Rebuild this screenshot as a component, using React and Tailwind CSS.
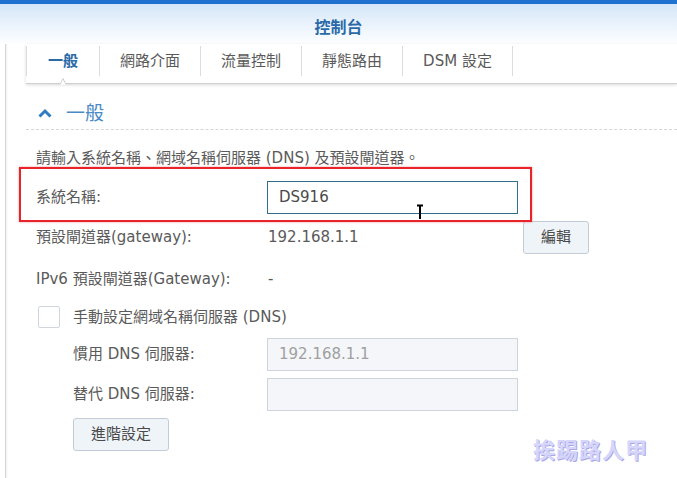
import React from 'react';

const cjk = "font-['DejaVu_Sans','Noto_Sans_CJK_TC',sans-serif]";

const tabs = [
    { label: '一般', w: 'w-[73px]', active: true },
    { label: '網路介面', w: 'w-[101px]' },
    { label: '流量控制', w: 'w-[101px]' },
    { label: '靜態路由', w: 'w-[101px]' },
    { label: 'DSM 設定', w: 'w-[111px]' },
];

const App = () => {
    return (
        <div className={`relative w-[677px] h-[478px] overflow-hidden bg-white text-[15px] text-[#5a5a5a] ${cjk}`}>
            {/* Title bar */}
            <div className="h-[4px] bg-[#1f72cf]" />
            <div className="h-[40px] bg-gradient-to-b from-[#d5e7f8] to-[#fdfeff] flex items-center justify-center pt-[8px]">
                <span className="text-[16px] font-bold text-[#2b6aa8]">控制台</span>
            </div>

            <div className="flex h-[434px]">
                {/* Left frame edge */}
                <div className="w-[8px] flex">
                    <div className="w-[5px]" />
                    <div className="w-[1px] bg-[#d6d6d6]" />
                    <div className="w-[2px] bg-gradient-to-r from-[#efefef] to-white" />
                </div>

                <div className="flex-1 pl-[18px]">
                    {/* Tabs */}
                    <div className="relative h-[40px] border-b border-[#d0d0d0] shadow-[0_1px_3px_rgba(0,0,0,0.15)]">
                        <div className="flex pt-[2px]">
                            {tabs.map((t, i) => (
                                <div
                                    key={t.label}
                                    className={`${t.w} h-[30px] flex items-center justify-center border-l border-[#dcdcdc] ${i === tabs.length - 1 ? 'border-r' : ''} ${t.active ? 'text-[#2a6aa6] font-bold' : 'text-[#5a5a5a]'}`}
                                >
                                    {t.label}
                                </div>
                            ))}
                        </div>
                        <svg className="absolute left-[29px] top-[33px]" width="16" height="8" viewBox="0 0 16 8">
                            <path d="M0 7.5 L5 7.5 L8 1.5 L11 7.5 L16 7.5" fill="white" stroke="#d0d0d0" strokeWidth="1" />
                            <rect x="0" y="7.6" width="16" height="1" fill="white" />
                        </svg>
                    </div>

                    {/* Section header */}
                    <div className="h-[46px] pt-[12px] border-b border-dashed border-[#d6d6d6] flex items-start">
                        <div className="h-[34px] flex items-center pl-[12px]">
                            <svg width="14" height="10" viewBox="0 0 14 10">
                                <path d="M1.5 8.5 L7 3 L12.5 8.5" fill="none" stroke="#2f7cc1" strokeWidth="3" />
                            </svg>
                            <span className="ml-[14px] text-[19px] text-[#4a8ac6]">一般</span>
                        </div>
                    </div>

                    <div className="pl-[10px]">
                        <div className="mt-[18px] h-[20px] leading-[20px]">請輸入系統名稱、網域名稱伺服器 (DNS) 及預設閘道器。</div>

                        {/* System name */}
                        <div className="mt-[13px] h-[33px] flex items-center">
                            <div className="w-[231px]">系統名稱:</div>
                            <div className="w-[251px] h-[33px] border border-[#2f6e8c] flex items-center pl-[11px] text-[#4a4a4a]">DS916</div>
                        </div>

                        {/* Gateway */}
                        <div className="mt-[7px] h-[33px] flex items-center">
                            <div className="w-[231px]">預設閘道器(gateway):</div>
                            <div className="w-[256px] pl-[1px]">192.168.1.1</div>
                            <button className="w-[66px] h-[33px] rounded-[3px] border border-[#c3ccd6] bg-[#eff4f9] text-[#4a4a4a]">編輯</button>
                        </div>

                        <div className="mt-[15px] h-[20px] flex items-center">
                            <div className="w-[231px]">IPv6 預設閘道器(Gateway):</div>
                            <div className="pl-[1px]">-</div>
                        </div>

                        {/* Manual DNS */}
                        <div className="mt-[17px] h-[22px] flex items-center">
                            <div className="ml-[2px] w-[22px] h-[22px] border border-[#cfd6de] rounded-[2px] bg-white" />
                            <div className="ml-[13px]">手動設定網域名稱伺服器 (DNS)</div>
                        </div>

                        <div className="mt-[10px] h-[33px] flex items-center">
                            <div className="w-[231px] pl-[37px]">慣用 DNS 伺服器:</div>
                            <div className="w-[251px] h-[33px] border border-[#cdd4dc] bg-[#f4f6f9] flex items-center pl-[11px] text-[#a0a0a0]">192.168.1.1</div>
                        </div>

                        <div className="mt-[7px] h-[33px] flex items-center">
                            <div className="w-[231px] pl-[37px]">替代 DNS 伺服器:</div>
                            <div className="w-[251px] h-[33px] border border-[#cdd4dc] bg-[#f4f6f9]" />
                        </div>

                        <div className="mt-[7px] pl-[37px]">
                            <button className="w-[96px] h-[33px] rounded-[3px] border border-[#c3ccd6] bg-[#eff4f9] text-[#4a4a4a]">進階設定</button>
                        </div>
                    </div>
                </div>
            </div>

            {/* Red highlight annotation */}
            <div className="absolute left-[19px] top-[167px] w-[513px] h-[55px] border-2 border-[#e8242a] shadow-[0_0_2px_rgba(232,36,42,0.5)] pointer-events-none" />

            {/* Text cursor */}
            <svg className="absolute left-[416px] top-[204px]" width="8" height="16" viewBox="0 0 8 16">
                <path d="M1 1.5 H7 M4 1.5 V15" stroke="black" strokeWidth="2" fill="none" />
            </svg>

            {/* Watermark */}
            <div className="absolute left-[533px] top-[434px] text-[22px] font-bold tracking-[1px] text-[#d6d6fa] [text-shadow:1px_1px_0_#a8a8e8,-1px_-1px_0_#ffffff,1px_-1px_0_#ffffff,-1px_1px_0_#ffffff]">
                挨踢路人甲
            </div>
        </div>
    );
};

export default App;
